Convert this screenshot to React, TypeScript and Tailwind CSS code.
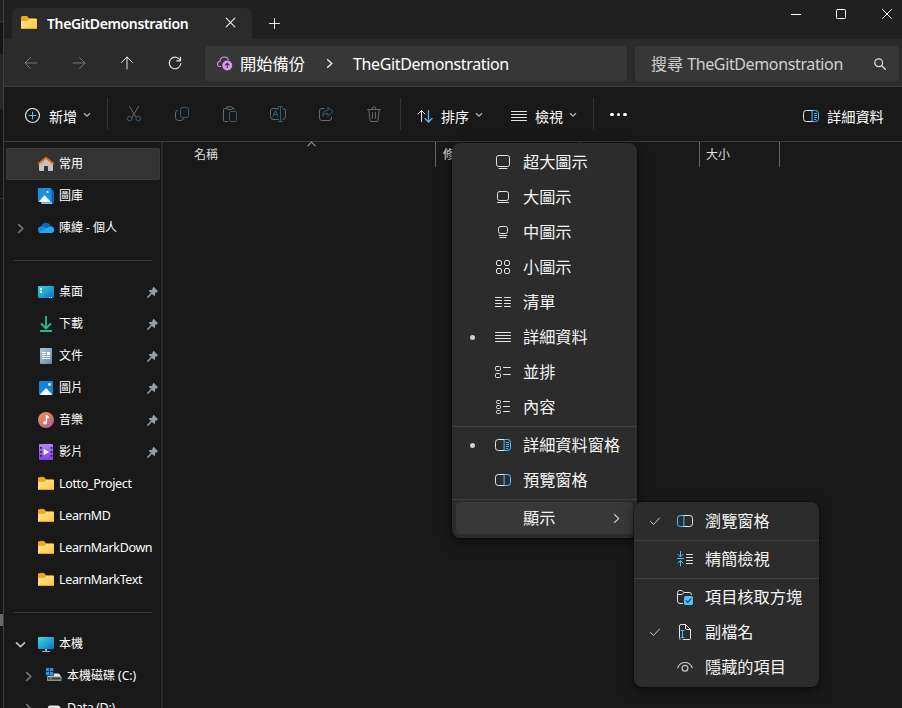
import React from "react";

type Children = { children?: React.ReactNode };

const BLUE = "#4cc2ff";

function Icon({ children, w = 16, h = 16, color = "#e4e4e4", className = "" }: Children & { w?: number; h?: number; color?: string; className?: string }) {
  return (
    <svg width={w} height={h} viewBox={`0 0 ${w} ${h}`} fill="none" stroke={color} strokeWidth="1" strokeLinecap="round" strokeLinejoin="round" className={`block shrink-0 ${className}`}>
      {children}
    </svg>
  );
}

function Folder() {
  return (
    <svg width="16" height="16" viewBox="0 0 16 16" className="block shrink-0">
      <defs>
        <linearGradient id="folderFront" x1="0" y1="0" x2="1" y2="1">
          <stop offset="0" stopColor="#ffe8a0" />
          <stop offset="1" stopColor="#fbc53a" />
        </linearGradient>
      </defs>
      <path d="M0 2.5Q0 1 1.500 1H6l2 2.200h6.500Q16 3.200 16 4.500V8H0z" fill="#f5a80c" />
      <path d="M0 6h5.500q1 0 1.700-.7L8.400 4H15q1 0 1 1v8q0 1-1 1H1q-1 0-1-1z" fill="url(#folderFront)" />
      <path d="M.2 13.300Q.4 14 1 14h14q.6 0 .8-.7z" fill="#e0a020" />
    </svg>
  );
}

function HomeIcon() {
  return (
    <svg width="16" height="16" viewBox="0 0 16 16" className="block">
      <path d="M1 7.500 8 1.800l7 5.700V14q0 1-1 1h-4v-4.500q0-.6-.6-.6H6.600q-.6 0-.6.6V15H2q-1 0-1-1z" fill="#c3c3c3" />
      <path d="M.9 7.600 8 1.700l7.100 5.900" fill="none" stroke="#e8681c" strokeWidth="1.900" strokeLinecap="round" strokeLinejoin="round" />
    </svg>
  );
}

function GalleryIcon() {
  return (
    <svg width="16" height="16" viewBox="0 0 16 16" className="block">
      <path d="M3 2h11.500Q16 2 16 3.500v10.500q0 2-2 2H4.500Q3 16 3 14.500z" fill="#1460ac" />
      <path d="M3.500 14.200H14v1.800H4.500Q3 16 3 14.900z" fill="#8cc4f0" />
      <rect x="0" y="0" width="13.500" height="14" rx="1" fill="#1b90e0" />
      <path d="M1 13.500 6.500 7l6 6.500q-.5.5-1 .5H2q-.6 0-1-.5z" fill="#eef8ff" />
      <circle cx="9.500" cy="4" r="1.100" fill="#fff" />
    </svg>
  );
}

function CloudIcon() {
  return (
    <svg width="16" height="16" viewBox="0 0 16 16" className="block">
      <path d="M3.500 6Q4.500 2.800 8 2.800q3.200 0 4.500 3.200Q16 6.300 16 9.700q0 3.300-3.300 3.300H3.500Q0 13 0 9.500 0 6.500 3.500 6z" fill="#0b66c0" />
      <path d="M2 7q3-2 6 1l5.500 4.500q-1 .5-3 .5h-7Q0 13 0 9.500 0 7.700 2 7z" fill="#148be0" />
      <path d="M8 8.500Q13 4.500 15.700 8.200 17 13 12.700 13H3.500q-1.500 0-2.500-1z" fill="#28a8ea" />
    </svg>
  );
}

function DesktopIcon() {
  return (
    <svg width="16" height="16" viewBox="0 0 16 16" className="block">
      <defs>
        <linearGradient id="screenFill" x1="0" y1="0" x2="1" y2="1">
          <stop offset="0" stopColor="#38d5e0" />
          <stop offset="1" stopColor="#0b6fc8" />
        </linearGradient>
      </defs>
      <rect x="0" y="2" width="16" height="12" rx="1" fill="url(#screenFill)" />
      <path d="M2 4h2v2H2zM2 7h2v2H2zM11 13h1v1h-1zM13 13h1v1h-1z" fill="#fff" />
    </svg>
  );
}

function DownloadIcon() {
  return (
    <svg width="16" height="16" viewBox="0 0 16 16" className="block" fill="none" stroke="#25b98d" strokeWidth="1.900">
      <path d="M8 0v12M3 7.500l5 5 5-5M2 15h12" />
    </svg>
  );
}

function DocumentIcon() {
  return (
    <svg width="16" height="16" viewBox="0 0 16 16" className="block">
      <defs>
        <linearGradient id="docFill" x1="0" y1="0" x2="1" y2="1">
          <stop offset="0" stopColor="#b5c8dc" />
          <stop offset="1" stopColor="#6786a8" />
        </linearGradient>
      </defs>
      <rect x="2" y="0" width="12" height="16" rx="1" fill="url(#docFill)" />
      <path d="M4 4h4v1H4zM4 6h4v1H4zM9 4h3v3H9zM4 8h8v1H4zM4 10h8v1H4z" fill="#fff" />
    </svg>
  );
}

function PictureIcon() {
  return (
    <svg width="16" height="16" viewBox="0 0 16 16" className="block">
      <rect x="1" y="1" width="14" height="14" rx="1.300" fill="#1683d8" />
      <path d="M2 14.300 8 8l6 6.300q-.5.700-1.300.700H3.300q-.8 0-1.300-.7z" fill="#f2faff" />
      <circle cx="11.500" cy="4.500" r="1.400" fill="#d9f0ff" />
    </svg>
  );
}

function MusicIcon() {
  return (
    <svg width="16" height="16" viewBox="0 0 16 16" className="block">
      <defs>
        <linearGradient id="musicFill" x1="0" y1="0" x2="1" y2="1">
          <stop offset="0" stopColor="#f29450" />
          <stop offset=".5" stopColor="#da7468" />
          <stop offset="1" stopColor="#9a5cb0" />
        </linearGradient>
      </defs>
      <circle cx="8" cy="8" r="8" fill="url(#musicFill)" />
      <ellipse cx="7" cy="10.700" rx="2" ry="1.800" fill="#fff" />
      <path d="M7.800 3h1.300q.3 1.200 1.900 1.600v1.700q-1.200-.1-1.900-.6v5H7.800z" fill="#fff" />
    </svg>
  );
}

function VideoIcon() {
  return (
    <svg width="16" height="16" viewBox="0 0 16 16" className="block">
      <defs>
        <linearGradient id="videoFill" x1="0" y1="0" x2="0" y2="1">
          <stop offset="0" stopColor="#b184f2" />
          <stop offset="1" stopColor="#8243e0" />
        </linearGradient>
      </defs>
      <rect x="1" y="0" width="14" height="16" rx="1" fill="url(#videoFill)" />
      <path d="M2 3h2v1.700H2zM2 7h2v1.700H2zM2 11h2v1.700H2zM12.500 3h2v1.700h-2zM12.500 7h2v1.700h-2zM12.500 11h2v1.700h-2z" fill="#3c1a80" />
      <path d="M5.700 4.700 11 8l-5.300 3.300z" fill="#fff" />
    </svg>
  );
}

function ComputerIcon() {
  return (
    <svg width="16" height="16" viewBox="0 0 16 16" className="block">
      <defs>
        <linearGradient id="pcFill" x1="0" y1="0" x2="1" y2="1">
          <stop offset="0" stopColor="#3cdce0" />
          <stop offset="1" stopColor="#0b70c8" />
        </linearGradient>
      </defs>
      <rect x="0" y="1" width="16" height="12" rx="1" fill="url(#pcFill)" />
      <path d="M7 13h2v2h3v1H4v-1h3z" fill="#a5adb3" />
    </svg>
  );
}

function DriveIcon({ system }: { system?: boolean }) {
  return (
    <svg width="16" height="16" viewBox="0 0 16 16" className="block">
      <path d="M4 5.500h8q1 0 1.500.7L15.500 9.500H1L2.600 6.200q.5-.7 1.400-.7z" fill="#e4e4e4" />
      <rect x="1" y="8.500" width="14.500" height="4.500" rx=".8" fill="#8f8f8f" />
      <path d="M2 9.500h12.500v2H2z" fill="#3c3c3c" />
      <path d="M4 10h1.500v1H4z" fill="#45e06a" />
      {system && <path d="M0 0h7.800v7.800H0z" fill="#191919" />}
      {system && <path d="M0 0h3.300v3.300H0zM4 0h3.300v3.300H4zM0 4h3.300v3.300H0zM4 4h3.300v3.300H4z" fill="#1b9be8" />}
    </svg>
  );
}

function Pin() {
  return (
    <svg width="11" height="11" viewBox="0 0 11 11" className="block shrink-0">
      <path d="M6 .4Q6.500-.2 7.100.3l3.400 3.400q.5.600 0 1L8 6q.4 2-.7 3.300L1.700 3.700Q3.200 2.500 5 3z" fill="#93a1ab" />
      <path d="M4.500 6.200.4 10.600" stroke="#93a1ab" strokeWidth="1.500" />
    </svg>
  );
}

function Chevron({ dir, color = "#8c8c8c", sw = 1.700 }: { dir: "right" | "down" | "up"; color?: string; sw?: number }) {
  const d = dir === "right" ? "M3.200 1.200 7.700 5.500 3.200 9.800" : dir === "down" ? "M1 3.300 5.500 7.500 10 3.300" : "M1.500 7.200 5.500 3.200 9.500 7.200";
  return (
    <svg width="11" height="11" viewBox="0 0 11 11" fill="none" stroke={color} strokeWidth={sw} className="block shrink-0">
      <path d={d} />
    </svg>
  );
}

function SmallChevron() {
  return (
    <svg width="8" height="6" viewBox="0 0 8 6" fill="none" stroke="#b4b4b4" strokeWidth="1.300" className="mt-0.5 block shrink-0">
      <path d="M1 1.200 4 4.200 7 1.200" />
    </svg>
  );
}

function Pane({ side, lines }: { side: "left" | "right"; lines?: boolean }) {
  return side === "right" ? (
    <Icon>
      <path d="M9 2.500H3.300Q.5 2.500.5 5.300v5.400q0 2.800 2.800 2.800H9" />
      <path d="M9.500 2.500h3.200q2.800 0 2.800 2.800v5.400q0 2.800-2.800 2.800H9.500z" stroke={BLUE} />
      {lines && <path d="M11.500 5.500h2M11.500 7.500h2M11.500 9.500h2M11.500 11.500h1" stroke={BLUE} />}
    </Icon>
  ) : (
    <Icon>
      <path d="M7 2.500h5.700q2.800 0 2.800 2.800v5.400q0 2.800-2.800 2.800H7" />
      <path d="M6.500 2.500H3.300Q.5 2.500.5 5.300v5.400q0 2.800 2.800 2.800h3.200z" stroke={BLUE} />
    </Icon>
  );
}

function NavRow({ icon, label, pinned, selected, latin, arrow, indent }: { icon: React.ReactNode; label: string; pinned?: boolean; selected?: boolean; latin?: boolean; arrow?: "right" | "down"; indent?: boolean }) {
  return (
    <div className={`flex h-8 w-[154px] shrink-0 items-center rounded-[2px] ${selected ? "border border-[#3b3b3b] bg-[#333333]" : "border border-transparent"}`}>
      <div className={`mt-px flex shrink-0 justify-end pr-3 ${indent ? "w-[39px]" : "w-[31px]"}`}>
        {arrow && <Chevron dir={arrow} color={arrow === "down" ? "#c4c4c4" : "#747474"} />}
      </div>
      {icon}
      <span className={`ml-[5px] whitespace-nowrap text-white ${latin ? "text-[12.5px] leading-4 tracking-[-0.34px]" : "text-[12px] leading-4"}`}>{label}</span>
      {pinned && <div className="mt-px mr-px ml-auto"><Pin /></div>}
    </div>
  );
}

function NavDivider() {
  return (
    <div className="flex h-8 shrink-0 items-center pl-2">
      <div className="h-px w-[138px] bg-[#3c3c3c]" />
    </div>
  );
}

function MenuItem({ mark, icon, label }: { mark?: "dot" | "check"; icon?: React.ReactNode; label: string }) {
  return (
    <div className="flex h-[35px] items-center pb-px">
      <div className="mr-0.5 flex w-[41px] shrink-0 justify-center">
        {mark === "dot" && <div className="h-[5px] w-[5px] rounded-full bg-[#cfcfcf]" />}
        {mark === "check" && (
          <Icon w={12} h={10} color="#c8c8c8"><path d="M1.500 5.500 4.500 8.500 10.500 2" /></Icon>
        )}
      </div>
      {icon}
      <span className="ml-3 text-[16.2px] leading-6 whitespace-nowrap text-[#f4f4f4]">{label}</span>
    </div>
  );
}

function MenuDivider() {
  return <div className="my-px h-px bg-[#404040]" />;
}

function ViewIcon({ kind }: { kind: "xl" | "lg" | "md" | "sm" | "list" | "details" | "tiles" | "content" }) {
  switch (kind) {
    case "xl":
      return <Icon><rect x="1.500" y="1.500" width="13" height="11" rx="2" /><path d="M4 14.500h8" /></Icon>;
    case "lg":
      return <Icon><rect x="2.500" y="2.500" width="11" height="9" rx="2" /><path d="M2.500 13.500h11" /></Icon>;
    case "md":
      return <Icon><rect x="3.500" y="2.500" width="9" height="7" rx="2" /><path d="M4 11.500h8M5 13.500h6" /></Icon>;
    case "sm":
      return (
        <Icon>
          <rect x="1.500" y="1.500" width="5" height="5" rx="1.500" /><rect x="9.500" y="1.500" width="5" height="5" rx="1.500" />
          <rect x="1.500" y="9.500" width="5" height="5" rx="1.500" /><rect x="9.500" y="9.500" width="5" height="5" rx="1.500" />
        </Icon>
      );
    case "list":
      return <Icon><path d="M.5 3.500h6M.5 6.500h6M.5 9.500h6M.5 12.500h6M9.500 3.500h6M9.500 6.500h6M9.500 9.500h6M9.500 12.500h6" /></Icon>;
    case "details":
      return <Icon><path d="M.5 3.500h15M.5 6.500h15M.5 9.500h15M.5 12.500h15" /></Icon>;
    case "tiles":
      return (
        <Icon>
          <rect x=".5" y="2.500" width="5" height="4" rx="1" /><rect x=".5" y="9.500" width="5" height="4" rx="1" />
          <path d="M8.500 3.500h7M8.500 10.500h7" />
        </Icon>
      );
    case "content":
      return (
        <Icon>
          <rect x="1.500" y="1.500" width="4" height="3" rx="1" /><rect x="1.500" y="6.500" width="4" height="3" rx="1" /><rect x="1.500" y="11.500" width="4" height="3" rx="1" />
          <path d="M8.500 2.500h6M8.500 7.500h6M8.500 12.500h6" />
        </Icon>
      );
  }
}

function ToolCell({ children }: Children) {
  return <div className="flex w-12 shrink-0 items-center justify-center pb-px">{children}</div>;
}

function ToolDivider() {
  return <div className="h-8 w-px shrink-0 bg-[#333333]" />;
}

function TitleBar() {
  return (
    <div className="flex h-[39px] shrink-0 bg-[#202020]">
      <div className="mt-2 ml-2 flex w-60 items-center rounded-t-lg bg-[#2b2b2b] pb-px pl-[9px]">
        <Folder />
        <span className="ml-[10px] pt-px text-[14px] leading-5 font-semibold tracking-[-0.36px] text-white">TheGitDemonstration</span>
        <Icon w={11} h={11} color="#e8e8e8" className="mr-4 mb-px ml-auto"><path d="M1.200 1.200 9.800 9.800M9.800 1.200 1.200 9.800" strokeWidth="1.200" /></Icon>
      </div>
      <Icon w={11} h={11} color="#e8e8e8" className="mt-[18px] ml-[17px]"><path d="M5.500.5v10M.5 5.500h10" /></Icon>
      <div className="mt-[9px] mr-[10px] ml-auto flex h-[11px] gap-[35px]">
        <Icon w={10} h={11} color="#fff"><path d="M.5 5.500h9" /></Icon>
        <Icon w={10} h={11} color="#fff"><rect x=".5" y=".5" width="9" height="9" rx="1" /></Icon>
        <Icon w={10} h={11} color="#fff" className="ml-px"><path d="M.5.5 9.500 9.500M9.500.5.5 9.500" /></Icon>
      </div>
    </div>
  );
}

function AddressBar() {
  return (
    <div className="flex h-12 shrink-0 items-center border-b border-[#3c3c3c] bg-[#2b2b2b] pt-0.5 pr-[3px] pl-[3px]">
      <ToolCell><Icon color="#777"><path d="M14 8H2M7.500 2.500 2 8l5.500 5.500" /></Icon></ToolCell>
      <ToolCell><Icon color="#777"><path d="M2 8h12M8.500 2.500 14 8l-5.500 5.500" /></Icon></ToolCell>
      <ToolCell><Icon><path d="M8 14V2M2.500 7.500 8 2l5.500 5.500" /></Icon></ToolCell>
      <ToolCell><Icon><path d="M13.300 5.500A5.800 5.800 0 1 0 13.800 8.500M13.500 2v3.800H9.700" strokeWidth="1.150" /></Icon></ToolCell>
      <div className="ml-[6px] flex h-[35px] w-[422px] shrink-0 items-center rounded bg-[#373737] text-[16px] leading-6 text-white">
        <svg width="16" height="16" viewBox="0 0 16 16" className="mb-px ml-3 block shrink-0">
          <path d="M4 11.500H3Q.5 11.500.5 9T3 6.500Q3.500 2 7.200 2q3.500 0 4.200 3" fill="none" stroke="#d49be0" strokeWidth="1.100" />
          <circle cx="10.200" cy="10.500" r="5" fill="#d79be4" />
          <path d="M10.200 13V8.300M8 10.300l2.200-2.200 2.200 2.200" fill="none" stroke="#4b3350" strokeWidth="1.100" />
        </svg>
        <span className="mt-px ml-[7px] w-[66px] text-[16.3px] whitespace-nowrap">開始備份</span>
        <div className="ml-[18px]"><Chevron dir="right" color="#e8e8e8" sw={1.500} /></div>
        <span className="mt-px ml-[18px] tracking-[-0.37px]">TheGitDemonstration</span>
      </div>
      <div className="ml-2 flex h-[35px] flex-1 items-center rounded bg-[#373737] text-[16px] leading-6 text-[#cfcfcf]">
        <span className="mt-px ml-4 whitespace-nowrap">搜尋 <span className="tracking-[-0.37px]">TheGitDemonstration</span></span>
        <Icon w={12} h={12} color="#dedede" className="mt-px mr-[13px] ml-auto"><circle cx="4.700" cy="4.700" r="3.900" strokeWidth="1.200" /><path d="M7.700 7.700 11.300 11.300" strokeWidth="1.300" /></Icon>
      </div>
    </div>
  );
}

function Toolbar() {
  const dim = "#686868";
  const dimBlue = "#2c5d78";
  return (
    <div className="flex h-[55px] shrink-0 items-center border-b border-[#3c3c3c] bg-[#191919] text-[14px] leading-5 text-white">
      <Icon className="mt-1 ml-[21px]"><circle cx="7.500" cy="7.500" r="7" strokeWidth="1.200" /><path d="M7.500 4v7M4 7.500h7" stroke={BLUE} /></Icon>
      <span className="mt-[5px] ml-2">新增</span>
      <div className="ml-[6px]"><SmallChevron /></div>
      <div className="ml-4"><ToolDivider /></div>
      <div className="ml-0.5 flex pt-px">
        <ToolCell>
          <Icon color={dim}>
            <path d="M3.500.5 9.800 11M12.500.5 6.200 11" />
            <circle cx="3.700" cy="12.600" r="2.300" stroke={dimBlue} /><circle cx="12.300" cy="12.600" r="2.300" stroke={dimBlue} />
          </Icon>
        </ToolCell>
        <ToolCell>
          <Icon color={dim}>
            <path d="M3.500 4.500Q1.500 4.700 1.500 7v4.500q0 3 3 3H7q2 0 2.500-2" />
            <rect x="6.500" y="1.500" width="8" height="10" rx="2" stroke={dimBlue} />
          </Icon>
        </ToolCell>
        <ToolCell>
          <Icon color={dim}>
            <path d="M4.500 2.500h-2q-1 0-1 1v11q0 1 1 1h3M10.500 2.500h1q1 0 1 1" /><rect x="4.500" y=".8" width="6" height="2.700" rx="1.200" />
            <rect x="7.500" y="5.500" width="7" height="10" rx="1" stroke={dimBlue} />
          </Icon>
        </ToolCell>
        <ToolCell>
          <Icon color={dim}>
            <path d="M8.500 2.500H3Q.5 2.500.5 5v5.500Q.5 13.500 3 13.500h5.500M13 2.500q2.500 0 2.500 2.500v5.500q0 3-2.500 3" />
            <path d="M8.500.5h4M10.500.5v15M8.500 15.500h4M3 10.500 5.500 4.500 8 10.500M4 8.500h3" stroke={dimBlue} />
          </Icon>
        </ToolCell>
        <ToolCell>
          <Icon color={dim}>
            <path d="M6 2.500H4Q1.500 2.500 1.500 5v7q0 2.500 2.500 2.500h7q2.500 0 2.500-2.500v-1" />
            <path d="M10 1.500 15 5.500 10 10V7.500Q6.500 7 4.500 10 5 4.500 10 3.800z" stroke={dimBlue} />
          </Icon>
        </ToolCell>
        <ToolCell>
          <Icon color={dim}>
            <path d="M1.500 3.500h13M2.800 3.500l1.200 11q.1 1 1 1h6q.9 0 1-1l1.200-11M6 3Q6 .8 8 .8T10 3M6.500 6.500v6M9.500 6.500v6" />
          </Icon>
        </ToolCell>
      </div>
      <div className="ml-0.5"><ToolDivider /></div>
      <Icon className="mt-1 ml-4"><path d="M4.500 13.500v-11M1 6l3.500-3.500L8 6" /><path d="M11.500 2.500V14M8 10.500l3.500 3.500L15 10.500" stroke={BLUE} strokeWidth="1.200" /></Icon>
      <span className="mt-[5px] ml-2">排序</span>
      <div className="ml-[6px]"><SmallChevron /></div>
      <div className="mt-1 ml-7"><ViewIcon kind="details" /></div>
      <span className="mt-[5px] ml-2">檢視</span>
      <div className="ml-[6px]"><SmallChevron /></div>
      <div className="ml-4"><ToolDivider /></div>
      <div className="ml-4 flex gap-[3px]">
        <div className="h-[3px] w-[3.5px] rounded-full bg-white" />
        <div className="h-[3px] w-[3.5px] rounded-full bg-white" />
        <div className="h-[3px] w-[3.5px] rounded-full bg-white" />
      </div>
      <div className="mt-1 ml-auto"><Pane side="right" lines /></div>
      <span className="mt-[5px] mr-[18px] ml-2 w-[57px] text-[14.2px] whitespace-nowrap">詳細資料</span>
    </div>
  );
}

function Sidebar() {
  return (
    <div className="flex w-[157px] shrink-0 flex-col overflow-hidden pt-[6px] pl-[2px]">
      <NavRow selected icon={<HomeIcon />} label="常用" />
      <NavRow icon={<GalleryIcon />} label="圖庫" />
      <NavRow arrow="right" icon={<CloudIcon />} label="陳緯 - 個人" />
      <NavDivider />
      <NavRow pinned icon={<DesktopIcon />} label="桌面" />
      <NavRow pinned icon={<DownloadIcon />} label="下載" />
      <NavRow pinned icon={<DocumentIcon />} label="文件" />
      <NavRow pinned icon={<PictureIcon />} label="圖片" />
      <NavRow pinned icon={<MusicIcon />} label="音樂" />
      <NavRow pinned icon={<VideoIcon />} label="影片" />
      <NavRow latin icon={<Folder />} label="Lotto_Project" />
      <NavRow latin icon={<Folder />} label="LearnMD" />
      <NavRow latin icon={<Folder />} label="LearnMarkDown" />
      <NavRow latin icon={<Folder />} label="LearnMarkText" />
      <NavDivider />
      <NavRow arrow="down" icon={<ComputerIcon />} label="本機" />
      <NavRow indent arrow="right" icon={<DriveIcon system />} label="本機磁碟 (C:)" />
      <NavRow indent arrow="right" latin icon={<DriveIcon />} label="Data (D:)" />
    </div>
  );
}

function FileHeader() {
  return (
    <div className="flex h-[25px] text-[12px] leading-[25px] text-[#dedede]">
      <div className="relative w-[273px] border-r border-[#636363] pl-[31px]">
        名稱
        <div className="absolute top-[-3px] left-[143px]"><Chevron dir="up" color="#9a9a9a" sw={1.1} /></div>
      </div>
      <div className="w-36 border-r border-[#636363] pl-[7px] whitespace-nowrap">修改日期</div>
      <div className="w-[120px] border-r border-[#636363] pl-[7px]">類型</div>
      <div className="w-20 border-r border-[#636363] pl-[6px]">大小</div>
    </div>
  );
}

function ViewMenu() {
  return (
    <div className="absolute top-[143px] left-[452px] w-[185px] rounded-lg bg-[#2c2c2c] pt-0.5 pb-1 shadow-[0_4px_12px_rgba(0,0,0,0.5),0_0_1px_1px_rgba(0,0,0,0.25)]">
      <MenuItem icon={<ViewIcon kind="xl" />} label="超大圖示" />
      <MenuItem icon={<ViewIcon kind="lg" />} label="大圖示" />
      <MenuItem icon={<ViewIcon kind="md" />} label="中圖示" />
      <MenuItem icon={<ViewIcon kind="sm" />} label="小圖示" />
      <MenuItem icon={<ViewIcon kind="list" />} label="清單" />
      <MenuItem mark="dot" icon={<ViewIcon kind="details" />} label="詳細資料" />
      <MenuItem icon={<ViewIcon kind="tiles" />} label="並排" />
      <MenuItem icon={<ViewIcon kind="content" />} label="內容" />
      <MenuDivider />
      <MenuItem mark="dot" icon={<Pane side="right" lines />} label="詳細資料窗格" />
      <MenuItem icon={<Pane side="right" />} label="預覽窗格" />
      <MenuDivider />
      <div className="mx-1 mt-0.5 flex h-8 items-center rounded bg-[#383838] pr-[11px] pl-[67px]">
        <span className="text-[16.2px] leading-6 text-[#f4f4f4]">顯示</span>
        <div className="ml-auto"><Chevron dir="right" color="#c8c8c8" sw={1.2} /></div>
      </div>
    </div>
  );
}

function ShowSubmenu() {
  return (
    <div className="absolute top-[502px] left-[634px] w-[185px] rounded-lg bg-[#2c2c2c] py-0.5 shadow-[0_4px_12px_rgba(0,0,0,0.5),0_0_1px_1px_rgba(0,0,0,0.25)]">
      <MenuItem mark="check" icon={<Pane side="left" />} label="瀏覽窗格" />
      <MenuDivider />
      <MenuItem
        icon={
          <Icon>
            <path d="M3.500.5v5M1 3.500 3.500 6 6 3.500M.5 7.500h6M3.500 15v-5M1 12 3.500 9.500 6 12" stroke={BLUE} />
            <path d="M9.500 3.500h6M9.500 6.500h6M9.500 9.500h6M9.500 12.500h6" />
          </Icon>
        }
        label="精簡檢視"
      />
      <MenuDivider />
      <MenuItem
        icon={
          <Icon>
            <path d="M5.500 14.500H3Q.5 14.500.5 12V3.500Q.5 1.500 2.500 1.500H5L7 3.500h5.500q2 0 2 2M.5 5.500H5L7 3.500" />
            <rect x="7" y="7" width="9" height="9" rx="1.500" fill={BLUE} stroke="none" />
            <path d="M9.200 11.700 10.800 13.300 14 9.900" stroke="#16354a" strokeWidth="1.200" />
          </Icon>
        }
        label="項目核取方塊"
      />
      <MenuItem
        mark="check"
        icon={
          <Icon>
            <path d="M6 15.500h6.500q1 0 1-1v-9L8.500.5H4Q2.500.5 2.500 2v11.500q0 1 .5 2M8.500.5V4q0 1.500 1.500 1.500h3.500" />
            <path d="M4 6.500h3M5.500 6.500v7M4 13.500h3" stroke={BLUE} />
          </Icon>
        }
        label="副檔名"
      />
      <MenuItem
        icon={
          <Icon color="#c8c8c8"><path d="M.8 8.800Q2.500 3.500 8 3.500t7.200 5.300" strokeWidth="1.200" /><circle cx="8" cy="9.300" r="2.900" strokeWidth="1.200" /></Icon>
        }
        label="隱藏的項目"
      />
    </div>
  );
}

export default function App() {
  return (
    <div className="relative flex h-[708px] w-[902px] overflow-hidden bg-[#191919] font-['Noto_Sans','Noto_Sans_CJK_TC',sans-serif]">
      <div className="flex w-[3px] shrink-0 flex-col bg-[#151618]">
        <div className="h-[21px] bg-[#202125]" />
        <div className="h-px bg-[#3a3a3c]" />
        <div className="mt-8 h-[55px] bg-[#26272b]" />
        <div className="mt-[89px] h-px bg-[#303134]" />
        <div className="mt-[415px] h-3 bg-[#68696c]" />
      </div>
      <div className="w-px shrink-0 bg-[#3e3e40]" />
      <div className="flex min-w-0 flex-1 flex-col">
        <TitleBar />
        <AddressBar />
        <Toolbar />
        <div className="flex min-h-0 flex-1">
          <Sidebar />
          <div className="w-0.5 shrink-0 bg-[#2a2a2a]" />
          <FileHeader />
        </div>
      </div>
      <ViewMenu />
      <ShowSubmenu />
    </div>
  );
}
